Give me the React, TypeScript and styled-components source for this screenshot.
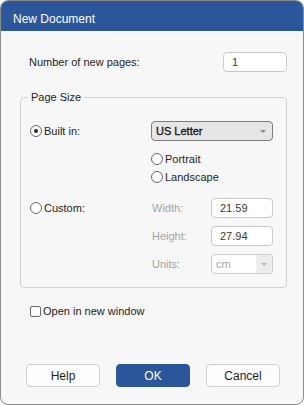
import React, { useState } from "react";
import styled, { createGlobalStyle } from "styled-components";

const GlobalStyle = createGlobalStyle`
  html, body {
    margin: 0;
    padding: 0;
    background: #ffffff;
  }
  body {
    font-family: "Liberation Sans", Arial, sans-serif;
    font-size: 11px;
    color: #1e1e1e;
  }
`;

const Window = styled.div`
  box-sizing: border-box;
  width: 304px;
  height: 405px;
  border: 1px solid #8c8c8c;
  border-radius: 8px;
  overflow: hidden;
  background: #f7f7f7;
  display: flex;
  flex-direction: column;
`;

const TitleBar = styled.div`
  box-sizing: border-box;
  height: 30px;
  background: #2b579a;
  color: #ffffff;
  font-size: 12px;
  display: flex;
  align-items: center;
  padding: 5px 0 0 12px;
`;

const Body = styled.div`
  flex: 1;
  display: flex;
  flex-direction: column;
  padding: 21px 16px 17px 19px;
`;

const Row = styled.div`
  display: flex;
  align-items: center;
  justify-content: space-between;
  height: 20px;
  padding-left: 9px;
`;

const TextBox = styled.div<{ $width: number }>`
  box-sizing: border-box;
  width: ${(p) => p.$width}px;
  height: 20px;
  border: 1px solid #c9c9c9;
  border-radius: 4px;
  background: #ffffff;
  display: flex;
  align-items: center;
  padding-left: 8px;
  color: #3a3a3a;
`;

const Group = styled.div`
  margin-top: 25px;
  border: 1px solid #d2d2d2;
  border-radius: 4px;
  padding: 0 13px 13px 9px;
  display: flex;
  flex-direction: column;
`;

const Legend = styled.div`
  align-self: flex-start;
  margin: -8px 0 0 -2px;
  padding: 0 3px;
  line-height: 15px;
  background: #f7f7f7;
  color: #1e1e1e;
`;

const Grid = styled.div`
  margin-top: 16px;
  display: grid;
  grid-template-columns: 121px 122px;
`;

const Cell = styled.div<{ $top?: number }>`
  display: flex;
  flex-direction: column;
  margin-top: ${(p) => p.$top ?? 0}px;
`;

const Option = styled.label<{ $h?: number }>`
  display: flex;
  align-items: center;
  gap: 2px;
  height: ${(p) => p.$h ?? 20}px;
  color: #1e1e1e;
`;

const RadioDot = styled.span<{ $on?: boolean }>`
  box-sizing: border-box;
  width: 12px;
  height: 12px;
  border-radius: 50%;
  border: 1px solid #6a6a6a;
  background: #ffffff;
  display: flex;
  align-items: center;
  justify-content: center;
  &::after {
    content: "";
    display: ${(p) => (p.$on ? "block" : "none")};
    width: 4px;
    height: 4px;
    border-radius: 50%;
    background: #2a2a2a;
  }
`;

const CheckBox = styled.span`
  box-sizing: border-box;
  width: 11px;
  height: 11px;
  border: 1px solid #6a6a6a;
  border-radius: 2px;
  background: #ffffff;
`;

const Select = styled.div<{ $disabled?: boolean }>`
  box-sizing: border-box;
  width: ${(p) => (p.$disabled ? 62 : 122)}px;
  height: 20px;
  border: 1px solid ${(p) => (p.$disabled ? "#cbcbcb" : "#7d7d7d")};
  border-radius: 4px;
  background: ${(p) => (p.$disabled ? "#ffffff" : "#e6e6e6")};
  display: flex;
  align-items: stretch;
  overflow: hidden;
  color: ${(p) => (p.$disabled ? "#a3a3a3" : "#111111")};
  -webkit-text-stroke: ${(p) => (p.$disabled ? 0 : 0.3)}px;
`;

const SelectText = styled.span`
  flex: 1;
  display: flex;
  align-items: center;
  padding-left: 4px;
`;

const SelectArrow = styled.span<{ $disabled?: boolean }>`
  width: ${(p) => (p.$disabled ? 16 : 18)}px;
  display: flex;
  align-items: center;
  justify-content: center;
  background: ${(p) => (p.$disabled ? "#ededed" : "transparent")};
  &::after {
    content: "";
    border-left: 3px solid transparent;
    border-right: 3px solid transparent;
    border-top: 3px solid ${(p) => (p.$disabled ? "#b5b5b5" : "#8a8a8a")};
  }
`;

const Field = styled.div`
  display: flex;
  align-items: center;
  justify-content: space-between;
  height: 20px;
  padding-left: 1px;
  color: #a3a3a3;
  & + & {
    margin-top: 8px;
  }
`;

const CheckRow = styled.label`
  display: flex;
  align-items: center;
  gap: 2px;
  margin-top: 17px;
  padding-left: 10px;
  height: 12px;
`;

const Buttons = styled.div`
  margin-top: auto;
  display: flex;
  gap: 16px;
  padding-left: 6px;
`;

const Button = styled.button<{ $primary?: boolean }>`
  box-sizing: border-box;
  width: 74px;
  height: 23px;
  border-radius: 4px;
  border: 1px solid ${(p) => (p.$primary ? "#2b579a" : "#d0d0d0")};
  background: ${(p) => (p.$primary ? "#2b579a" : "#fdfdfd")};
  color: ${(p) => (p.$primary ? "#ffffff" : "#1e1e1e")};
  font-family: inherit;
  font-size: 12px;
  padding: 0;
`;

export default function App() {
  const [mode, setMode] = useState<"builtin" | "custom">("builtin");
  const [pages] = useState("1");

  return (
    <>
      <GlobalStyle />
      <Window>
        <TitleBar>New Document</TitleBar>
        <Body>
          <Row>
            <span>Number of new pages:</span>
            <TextBox $width={64}>{pages}</TextBox>
          </Row>

          <Group>
            <Legend>Page Size</Legend>
            <Grid>
              <Option onClick={() => setMode("builtin")}>
                <RadioDot $on={mode === "builtin"} />
                Built in:
              </Option>
              <Select>
                <SelectText>US Letter</SelectText>
                <SelectArrow />
              </Select>

              <div />
              <Cell $top={9}>
                <Option $h={18}>
                  <RadioDot />
                  Portrait
                </Option>
                <Option $h={18}>
                  <RadioDot />
                  Landscape
                </Option>
              </Cell>

              <Cell $top={12}>
                <Option onClick={() => setMode("custom")}>
                  <RadioDot $on={mode === "custom"} />
                  Custom:
                </Option>
              </Cell>
              <Cell $top={12}>
                <Field>
                  Width:
                  <TextBox $width={62}>21.59</TextBox>
                </Field>
                <Field>
                  Height:
                  <TextBox $width={62}>27.94</TextBox>
                </Field>
                <Field>
                  Units:
                  <Select $disabled>
                    <SelectText>cm</SelectText>
                    <SelectArrow $disabled />
                  </Select>
                </Field>
              </Cell>
            </Grid>
          </Group>

          <CheckRow>
            <CheckBox />
            Open in new window
          </CheckRow>

          <Buttons>
            <Button>Help</Button>
            <Button $primary>OK</Button>
            <Button>Cancel</Button>
          </Buttons>
        </Body>
      </Window>
    </>
  );
}
